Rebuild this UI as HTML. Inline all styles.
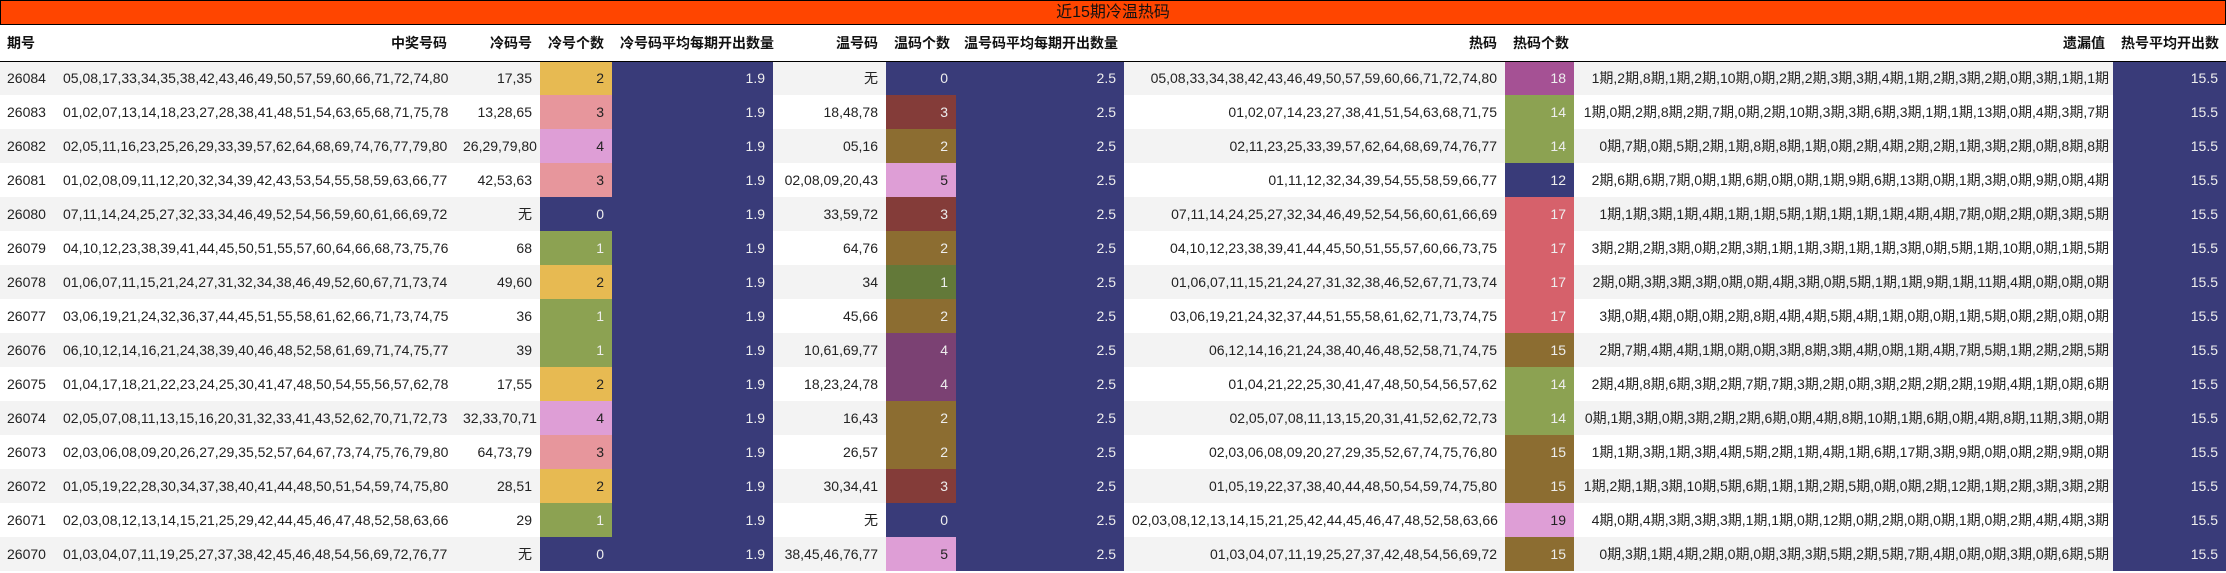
<!DOCTYPE html>
<html><head><meta charset="utf-8"><style>
*{margin:0;padding:0;box-sizing:border-box}
body{width:2226px;height:573px;background:#fff;font-family:"Liberation Sans","Noto Sans CJK SC",sans-serif;font-size:14px;color:#222;overflow:hidden}
.title{height:25px;background:#ff4500;border:1px solid #000;text-align:center;font-size:16px;line-height:23px;color:#111}
table{border-collapse:collapse;table-layout:fixed;width:2226px}
td,th{white-space:nowrap;text-align:right;padding:0 8px;overflow:visible;height:34px}
th{height:36px;font-weight:bold;border-bottom:1px solid #000;color:#111}
th.l,td.l{text-align:left;padding-left:7px}
tr:nth-child(even) td{background:#f3f3f3}
td.w{color:#eee}
.y{background:#e7ba52!important}.p{background:#e7969c!important}.pl{background:#de9ed6!important}
.g{background:#8ca252!important;color:#eee}.n{background:#393b79!important;color:#eee}
.r{background:#843c39!important;color:#eee}.b{background:#8c6d31!important;color:#eee}
.m{background:#7b4173!important;color:#eee}.dg{background:#637939!important;color:#eee}
.mg{background:#a55194!important;color:#eee}.rd{background:#d6616b!important;color:#eee}
.ym{padding:0 4px}
</style></head><body>
<div class="title">近15期冷温热码</div>
<table>
<colgroup><col style="width:55px"><col style="width:400px"><col style="width:85px"><col style="width:72px"><col style="width:161px"><col style="width:113px"><col style="width:70px"><col style="width:168px"><col style="width:381px"><col style="width:69px"><col style="width:539px"><col style="width:113px"></colgroup>
<tr><th class="l">期号</th><th>中奖号码</th><th>冷码号</th><th>冷号个数</th><th>冷号码平均每期开出数量</th><th>温号码</th><th>温码个数</th><th>温号码平均每期开出数量</th><th>热码</th><th>热码个数</th><th>遗漏值</th><th>热号平均开出数</th></tr>
<tr><td class="l">26084</td><td>05,08,17,33,34,35,38,42,43,46,49,50,57,59,60,66,71,72,74,80</td><td>17,35</td><td class="y">2</td><td class="n">1.9</td><td>无</td><td class="n">0</td><td class="n">2.5</td><td>05,08,33,34,38,42,43,46,49,50,57,59,60,66,71,72,74,80</td><td class="mg">18</td><td class="ym">1期,2期,8期,1期,2期,10期,0期,2期,2期,3期,3期,4期,1期,2期,3期,2期,0期,3期,1期,1期</td><td class="n">15.5</td></tr>
<tr><td class="l">26083</td><td>01,02,07,13,14,18,23,27,28,38,41,48,51,54,63,65,68,71,75,78</td><td>13,28,65</td><td class="p">3</td><td class="n">1.9</td><td>18,48,78</td><td class="r">3</td><td class="n">2.5</td><td>01,02,07,14,23,27,38,41,51,54,63,68,71,75</td><td class="g">14</td><td class="ym">1期,0期,2期,8期,2期,7期,0期,2期,10期,3期,3期,6期,3期,1期,1期,13期,0期,4期,3期,7期</td><td class="n">15.5</td></tr>
<tr><td class="l">26082</td><td>02,05,11,16,23,25,26,29,33,39,57,62,64,68,69,74,76,77,79,80</td><td>26,29,79,80</td><td class="pl">4</td><td class="n">1.9</td><td>05,16</td><td class="b">2</td><td class="n">2.5</td><td>02,11,23,25,33,39,57,62,64,68,69,74,76,77</td><td class="g">14</td><td class="ym">0期,7期,0期,5期,2期,1期,8期,8期,1期,0期,2期,4期,2期,2期,1期,3期,2期,0期,8期,8期</td><td class="n">15.5</td></tr>
<tr><td class="l">26081</td><td>01,02,08,09,11,12,20,32,34,39,42,43,53,54,55,58,59,63,66,77</td><td>42,53,63</td><td class="p">3</td><td class="n">1.9</td><td>02,08,09,20,43</td><td class="pl">5</td><td class="n">2.5</td><td>01,11,12,32,34,39,54,55,58,59,66,77</td><td class="n">12</td><td class="ym">2期,6期,6期,7期,0期,1期,6期,0期,0期,1期,9期,6期,13期,0期,1期,3期,0期,9期,0期,4期</td><td class="n">15.5</td></tr>
<tr><td class="l">26080</td><td>07,11,14,24,25,27,32,33,34,46,49,52,54,56,59,60,61,66,69,72</td><td>无</td><td class="n">0</td><td class="n">1.9</td><td>33,59,72</td><td class="r">3</td><td class="n">2.5</td><td>07,11,14,24,25,27,32,34,46,49,52,54,56,60,61,66,69</td><td class="rd">17</td><td class="ym">1期,1期,3期,1期,4期,1期,1期,5期,1期,1期,1期,1期,4期,4期,7期,0期,2期,0期,3期,5期</td><td class="n">15.5</td></tr>
<tr><td class="l">26079</td><td>04,10,12,23,38,39,41,44,45,50,51,55,57,60,64,66,68,73,75,76</td><td>68</td><td class="g">1</td><td class="n">1.9</td><td>64,76</td><td class="b">2</td><td class="n">2.5</td><td>04,10,12,23,38,39,41,44,45,50,51,55,57,60,66,73,75</td><td class="rd">17</td><td class="ym">3期,2期,2期,3期,0期,2期,3期,1期,1期,3期,1期,1期,3期,0期,5期,1期,10期,0期,1期,5期</td><td class="n">15.5</td></tr>
<tr><td class="l">26078</td><td>01,06,07,11,15,21,24,27,31,32,34,38,46,49,52,60,67,71,73,74</td><td>49,60</td><td class="y">2</td><td class="n">1.9</td><td>34</td><td class="dg">1</td><td class="n">2.5</td><td>01,06,07,11,15,21,24,27,31,32,38,46,52,67,71,73,74</td><td class="rd">17</td><td class="ym">2期,0期,3期,3期,3期,0期,0期,4期,3期,0期,5期,1期,1期,9期,1期,11期,4期,0期,0期,0期</td><td class="n">15.5</td></tr>
<tr><td class="l">26077</td><td>03,06,19,21,24,32,36,37,44,45,51,55,58,61,62,66,71,73,74,75</td><td>36</td><td class="g">1</td><td class="n">1.9</td><td>45,66</td><td class="b">2</td><td class="n">2.5</td><td>03,06,19,21,24,32,37,44,51,55,58,61,62,71,73,74,75</td><td class="rd">17</td><td class="ym">3期,0期,4期,0期,0期,2期,8期,4期,4期,5期,4期,1期,0期,0期,1期,5期,0期,2期,0期,0期</td><td class="n">15.5</td></tr>
<tr><td class="l">26076</td><td>06,10,12,14,16,21,24,38,39,40,46,48,52,58,61,69,71,74,75,77</td><td>39</td><td class="g">1</td><td class="n">1.9</td><td>10,61,69,77</td><td class="m">4</td><td class="n">2.5</td><td>06,12,14,16,21,24,38,40,46,48,52,58,71,74,75</td><td class="b">15</td><td class="ym">2期,7期,4期,4期,1期,0期,0期,3期,8期,3期,4期,0期,1期,4期,7期,5期,1期,2期,2期,5期</td><td class="n">15.5</td></tr>
<tr><td class="l">26075</td><td>01,04,17,18,21,22,23,24,25,30,41,47,48,50,54,55,56,57,62,78</td><td>17,55</td><td class="y">2</td><td class="n">1.9</td><td>18,23,24,78</td><td class="m">4</td><td class="n">2.5</td><td>01,04,21,22,25,30,41,47,48,50,54,56,57,62</td><td class="g">14</td><td class="ym">2期,4期,8期,6期,3期,2期,7期,7期,3期,2期,0期,3期,2期,2期,2期,19期,4期,1期,0期,6期</td><td class="n">15.5</td></tr>
<tr><td class="l">26074</td><td>02,05,07,08,11,13,15,16,20,31,32,33,41,43,52,62,70,71,72,73</td><td>32,33,70,71</td><td class="pl">4</td><td class="n">1.9</td><td>16,43</td><td class="b">2</td><td class="n">2.5</td><td>02,05,07,08,11,13,15,20,31,41,52,62,72,73</td><td class="g">14</td><td class="ym">0期,1期,3期,0期,3期,2期,2期,6期,0期,4期,8期,10期,1期,6期,0期,4期,8期,11期,3期,0期</td><td class="n">15.5</td></tr>
<tr><td class="l">26073</td><td>02,03,06,08,09,20,26,27,29,35,52,57,64,67,73,74,75,76,79,80</td><td>64,73,79</td><td class="p">3</td><td class="n">1.9</td><td>26,57</td><td class="b">2</td><td class="n">2.5</td><td>02,03,06,08,09,20,27,29,35,52,67,74,75,76,80</td><td class="b">15</td><td class="ym">1期,1期,3期,1期,3期,4期,5期,2期,1期,4期,1期,6期,17期,3期,9期,0期,0期,2期,9期,0期</td><td class="n">15.5</td></tr>
<tr><td class="l">26072</td><td>01,05,19,22,28,30,34,37,38,40,41,44,48,50,51,54,59,74,75,80</td><td>28,51</td><td class="y">2</td><td class="n">1.9</td><td>30,34,41</td><td class="r">3</td><td class="n">2.5</td><td>01,05,19,22,37,38,40,44,48,50,54,59,74,75,80</td><td class="b">15</td><td class="ym">1期,2期,1期,3期,10期,5期,6期,1期,1期,2期,5期,0期,0期,2期,12期,1期,2期,3期,3期,2期</td><td class="n">15.5</td></tr>
<tr><td class="l">26071</td><td>02,03,08,12,13,14,15,21,25,29,42,44,45,46,47,48,52,58,63,66</td><td>29</td><td class="g">1</td><td class="n">1.9</td><td>无</td><td class="n">0</td><td class="n">2.5</td><td>02,03,08,12,13,14,15,21,25,42,44,45,46,47,48,52,58,63,66</td><td class="pl">19</td><td class="ym">4期,0期,4期,3期,3期,3期,1期,1期,0期,12期,0期,2期,0期,0期,1期,0期,2期,4期,4期,3期</td><td class="n">15.5</td></tr>
<tr><td class="l">26070</td><td>01,03,04,07,11,19,25,27,37,38,42,45,46,48,54,56,69,72,76,77</td><td>无</td><td class="n">0</td><td class="n">1.9</td><td>38,45,46,76,77</td><td class="pl">5</td><td class="n">2.5</td><td>01,03,04,07,11,19,25,27,37,42,48,54,56,69,72</td><td class="b">15</td><td class="ym">0期,3期,1期,4期,2期,0期,0期,3期,3期,5期,2期,5期,7期,4期,0期,0期,3期,0期,6期,5期</td><td class="n">15.5</td></tr>
</table>
</body></html>
